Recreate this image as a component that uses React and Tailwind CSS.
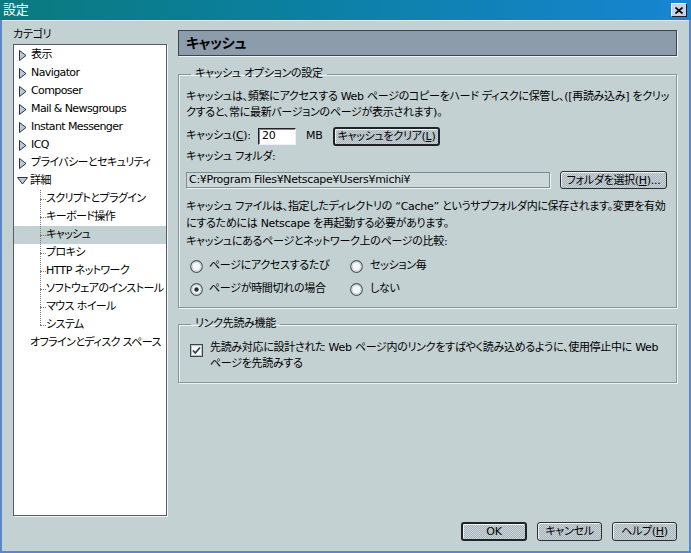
import React from "react";

const font = "font-['DejaVu_Sans','Noto_Sans_CJK_JP',sans-serif] [font-feature-settings:'palt']";
const dither = "bg-[repeating-conic-gradient(#c9d2d6_0_25%,#aab6bd_0_50%)] bg-[length:2px_2px]";

function TriRight() {
    return (
        <svg width="8" height="11" viewBox="0 0 8 11" className="shrink-0">
            <path d="M0.5 0.5 L7 5.5 L0.5 10.5 Z" fill="#b9c9dd" stroke="#2c3444" />
        </svg>
    );
}

function TriDown() {
    return (
        <svg width="11" height="8" viewBox="0 0 11 8" className="shrink-0">
            <path d="M0.5 0.5 L10.5 0.5 L5.5 7 Z" fill="#b9c9dd" stroke="#2c3444" />
        </svg>
    );
}

function Radio({ checked }) {
    return (
        <svg width="13" height="13" viewBox="0 0 13 13" className="shrink-0">
            <circle cx="6.5" cy="6.5" r="5.8" fill="#f4f6f7" stroke="#4c5860" strokeWidth="1.2" />
            <circle cx="6.5" cy="6.5" r="4.4" fill="none" stroke="#c0c8cc" strokeWidth="0.8" />
            {checked && <circle cx="6.5" cy="6.5" r="2.2" fill="#2a2e33" />}
        </svg>
    );
}

function Checkbox() {
    return (
        <svg width="13" height="13" viewBox="0 0 13 13" className="shrink-0">
            <rect x="0.5" y="0.5" width="12" height="12" fill="#f4f6f7" stroke="#3c4650" />
            <rect x="1.5" y="1.5" width="10" height="10" fill="none" stroke="#b8c2c8" />
            <path d="M3 6.5 L5.3 9 L10 3.5" fill="none" stroke="#3a4048" strokeWidth="1.8" />
        </svg>
    );
}

function Btn({ children, className = "", isDefault }) {
    return (
        <div
            className={`${dither} flex shrink-0 items-center justify-center whitespace-nowrap rounded-[3px] ${
                isDefault ? "border-2 border-[#1e2328]" : "border border-[#2a3036]"
            } shadow-[inset_1px_1px_0_#eef2f3] leading-none ${className}`}
        >
            {children}
        </div>
    );
}

const topItems = [
    "表示",
    "Navigator",
    "Composer",
    "Mail & Newsgroups",
    "Instant Messenger",
    "ICQ",
    "プライバシーとセキュリティ",
];

const children = [
    "スクリプトとプラグイン",
    "キーボード操作",
    "キャッシュ",
    "プロキシ",
    "HTTP ネットワーク",
    "ソフトウェアのインストール",
    "マウス ホイール",
    "システム",
];

function Tree() {
    return (
        <div className="mt-[2px] h-[472px] w-[154px] overflow-hidden whitespace-nowrap border border-[#585a6c] bg-white pt-[1px] tracking-[-0.6px] shadow-[1px_1px_0_#f2f5f6]">
            {topItems.map((t) => (
                <div key={t} className="flex h-[18px] items-center gap-[4px] pl-[5px]">
                    <TriRight />
                    <span>{t}</span>
                </div>
            ))}
            <div className="flex h-[18px] items-center gap-[2px] pl-[3px]">
                <TriDown />
                <span>詳細</span>
            </div>
            <div className="relative">
                <div className="absolute left-[26px] top-0 h-[135px] border-l border-dotted border-[#7a7a7a]" />
                {children.map((c) => (
                    <div
                        key={c}
                        className={`flex h-[18px] items-center ${c === "キャッシュ" ? "bg-[#c3d1d3]" : ""}`}
                    >
                        <div className="ml-[26px] w-[6px] border-t border-dotted border-[#7a7a7a]" />
                        <span>{c}</span>
                    </div>
                ))}
            </div>
            <div className="flex h-[18px] items-center pl-[16px]">オフラインとディスク スペース</div>
        </div>
    );
}

function Group({ title, children, className = "" }) {
    return (
        <fieldset
            className={`min-w-0 border border-[#86949c] shadow-[inset_1px_1px_0_#eef3f4,1px_1px_0_#eef3f4] px-[7px] ${className}`}
        >
            <legend className="ml-[5px] px-[4px] leading-[14px]">{title}</legend>
            {children}
        </fieldset>
    );
}

export default function App() {
    return (
        <div className={`${font} text-[11px] tracking-[-0.3px] text-black w-[691px] h-[553px] overflow-hidden`}>
            <div className="flex h-full w-full flex-col border-x-2 border-b-2 border-[#5d88c8] bg-[#c3d1d3]">
                {/* title bar */}
                <div className="-mx-[2px] flex h-[20px] shrink-0 items-center justify-between bg-gradient-to-r from-[#0b7a7d] to-[#1885d2] pl-[3px] pr-[4px]">
                    <span className="text-[13px] text-white">設定</span>
                    <div className="flex h-[14px] w-[16px] items-center justify-center border border-t-[#f4f7fb] border-l-[#f4f7fb] border-r-[#1a2030] border-b-[#1a2030] bg-[#c7d3e3]">
                        <svg width="8" height="7" viewBox="0 0 8 7">
                            <path d="M0.5 0.5 L7.5 6.5 M7.5 0.5 L0.5 6.5" stroke="#000" strokeWidth="1.6" />
                        </svg>
                    </div>
                </div>
                <div className="h-[1px] bg-[#dfe8ec]" />

                <div className="flex flex-1 gap-[11px] pl-[11px] pt-[7px]">
                    {/* left */}
                    <div className="flex shrink-0 flex-col">
                        <div className="h-[14px] leading-[14px]">カテゴリ</div>
                        <Tree />
                    </div>

                    {/* right */}
                    <div className="mt-[2px] flex h-[511px] w-[499px] shrink-0 flex-col">
                        <div className="flex h-[26px] items-center border border-[#3c4450] bg-[#8c9cab] pl-[7px] shadow-[1px_1px_0_#eef3f4]">
                            <span className="text-[14px] font-bold">キャッシュ</span>
                        </div>

                        <Group title="キャッシュ オプションの設定" className="mt-[11px] pb-[9px]">
                            <div className="mt-[8px] whitespace-nowrap leading-[16px]">
                                キャッシュは、頻繁にアクセスする Web ページのコピーをハード ディスクに保管し、([再読み込み] をクリッ
                                <br />
                                クすると、常に最新バージョンのページが表示されます)。
                            </div>
                            <div className="mt-[6px] flex h-[19px] items-center whitespace-nowrap">
                                <span className="w-[72px] shrink-0">
                                    キャッシュ(<span className="underline">C</span>):
                                </span>
                                <div className="flex h-[17px] w-[38px] shrink-0 items-center border border-[#222] border-r-[#eef] border-b-[#eef] bg-white pl-[3px] shadow-[inset_1px_1px_0_#808890]">
                                    20
                                </div>
                                <span className="ml-[10px] w-[27px] shrink-0">MB</span>
                                <Btn isDefault className="h-[19px] w-[107px]">
                                    キャッシュをクリア(<span className="underline">L</span>)
                                </Btn>
                            </div>
                            <div className="mt-[4px] h-[14px] leading-[14px]">キャッシュ フォルダ:</div>
                            <div className="mt-[7px] flex h-[18px] items-center justify-between pr-[2px]">
                                <div className="flex h-[16px] w-[364px] items-center whitespace-nowrap border border-[#7e8c94] bg-[#cdd8da] pl-[2px] shadow-[1px_1px_0_#eef3f4]">
                                    C:¥Program Files¥Netscape¥Users¥michi¥
                                </div>
                                <Btn className="h-[18px] w-[107px]">
                                    フォルダを選択(<span className="underline">H</span>)...
                                </Btn>
                            </div>
                            <div className="mt-[9px] whitespace-nowrap leading-[17px]">
                                キャッシュ ファイルは、指定したディレクトリの “Cache” というサブフォルダ内に保存されます。変更を有効
                                <br />
                                にするためには Netscape を再起動する必要があります。
                            </div>
                            <div className="mt-[2px] leading-[16px]">キャッシュにあるページとネットワーク上のページの比較:</div>
                            <div className="mt-[7px] grid grid-cols-[160px_1fr] gap-y-[5px] whitespace-nowrap pl-[4px]">
                                <div className="flex h-[18px] items-center gap-[6px]">
                                    <Radio />
                                    <span>ページにアクセスするたび</span>
                                </div>
                                <div className="flex h-[18px] items-center gap-[7px]">
                                    <Radio />
                                    <span>セッション毎</span>
                                </div>
                                <div className="flex h-[18px] items-center gap-[6px]">
                                    <Radio checked />
                                    <span>ページが時間切れの場合</span>
                                </div>
                                <div className="flex h-[18px] items-center gap-[7px]">
                                    <Radio />
                                    <span>しない</span>
                                </div>
                            </div>
                        </Group>

                        <Group title="リンク先読み機能" className="mt-[9px] pb-[10px]">
                            <div className="mt-[9px] flex gap-[7px] pl-[4px]">
                                <div className="pt-[4px]">
                                    <Checkbox />
                                </div>
                                <div className="whitespace-nowrap leading-[16px]">
                                    先読み対応に設計された Web ページ内のリンクをすばやく読み込めるように、使用停止中に Web
                                    <br />
                                    ページを先読みする
                                </div>
                            </div>
                        </Group>

                        <div className="mt-auto flex justify-end gap-[10px]">
                            <Btn isDefault className="h-[19px] w-[66px]">
                                OK
                            </Btn>
                            <Btn className="h-[19px] w-[65px]">キャンセル</Btn>
                            <Btn className="h-[19px] w-[65px]">
                                ヘルプ(<span className="underline">H</span>)
                            </Btn>
                        </div>
                    </div>
                </div>
                <div className="h-[10px]" />
            </div>
        </div>
    );
}
